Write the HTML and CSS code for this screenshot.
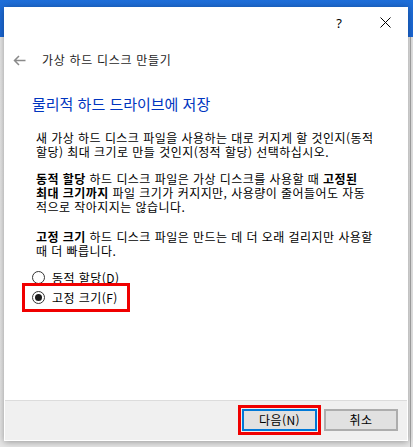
FILE: index.html
```html
<!DOCTYPE html>
<html lang="ko">
<head>
<meta charset="utf-8">
<title>가상 하드 디스크 만들기</title>
<link rel="stylesheet" href="styles.css">
</head>
<body>
<div class="dialog">
  <div class="titlebar">
    <span class="tb-btn help">?</span>
    <span class="tb-btn close"><svg width="11" height="11" viewBox="0 0 11 11"><path d="M0.5 0.5L10.5 10.5M10.5 0.5L0.5 10.5" fill="none" stroke="#000" stroke-width="1"/></svg></span>
  </div>
  <div class="nav">
    <svg class="back" width="13" height="11" viewBox="0 0 13 11"><path d="M12.5 5.5H1.5M6 1L1.5 5.5L6 10" fill="none" stroke="#8a8a8a" stroke-width="1.5"/></svg>
    <span class="nav-title">가상 하드 디스크 만들기</span>
  </div>
  <div class="content">
    <h1 class="heading">물리적 하드 드라이브에 저장</h1>
    <p class="text p1">새 가상 하드 디스크 파일을 사용하는 대로 커지게 할 것인지(동적<br>할당) 최대 크기로 만들 것인지(정적 할당) 선택하십시오.</p>
    <p class="text p2"><b>동적 할당</b> 하드 디스크 파일은 가상 디스크를 사용할 때 <b>고정된</b><br><b>최대 크기까지</b> 파일 크기가 커지지만, 사용량이 줄어들어도 자동<br>적으로 작아지지는 않습니다.</p>
    <p class="text p3"><b>고정 크기</b> 하드 디스크 파일은 만드는 데 더 오래 걸리지만 사용할<br>때 더 빠릅니다.</p>
    <div class="radios">
      <label class="radio"><span class="circle"></span>동적 할당(D)</label>
      <div class="mark">
        <label class="radio"><span class="circle checked"></span>고정 크기(F)</label>
      </div>
    </div>
  </div>
  <div class="footer">
    <div class="mark-btn"><button class="btn default">다음(N)</button></div>
    <button class="btn cancel">취소</button>
  </div>
</div>
</body>
</html>
```

FILE: styles.css
```css
html, body {
  margin: 0;
  padding: 0;
}
body {
  width: 413px;
  height: 447px;
  overflow: hidden;
  font-family: "Noto Sans CJK KR", "Noto Sans", sans-serif;
  background:
    linear-gradient(to left, #e4e4e4 0, #e4e4e4 2px, #a8a8a8 2px, #a8a8a8 3px, transparent 3px) right 37px / 6px 410px no-repeat,
    linear-gradient(to bottom, #1f6fd9 0, #1a66d4 37px, #e8e8e8 37px, #e6e6e6 100%);
}
.dialog {
  margin: 7px 0 0 4px;
  width: 404px;
  height: 434px;
  background: #fff;
  display: flex;
  flex-direction: column;
  box-shadow: 0 1px 7px rgba(0, 0, 0, 0.35);
}
.titlebar {
  height: 31px;
  flex: none;
  display: flex;
  justify-content: flex-end;
}
.tb-btn {
  width: 46px;
  height: 31px;
  display: flex;
  align-items: center;
  justify-content: center;
}
.help {
  font-family: "Noto Sans", sans-serif;
  font-size: 13px;
  color: #000;
  padding-top: 1px;
  box-sizing: border-box;
}
.close svg {
  display: block;
}
.nav {
  height: 44px;
  flex: none;
  display: flex;
  align-items: center;
  padding-left: 9px;
}
.back {
  display: block;
  margin-right: 16px;
}
.nav-title {
  font-size: 12px;
  color: #1e1e1e;
  line-height: 16px;
  letter-spacing: 0.7px;
}
.content {
  flex: 1;
  padding: 11px 0 0 28px;
}
.heading {
  margin: 0;
  font-size: 15px;
  font-weight: normal;
  line-height: 22px;
  color: #0035bf;
}
.text {
  margin: 16px 0 0 4px;
  font-size: 12px;
  line-height: 14px;
  letter-spacing: 0.45px;
  color: #000;
  white-space: nowrap;
}
.text b {
  font-weight: 700;
}
.p2 {
  margin-top: 13px;
}
.p3 {
  margin-top: 16px;
}
.radios {
  margin-top: 10px;
  display: flex;
  flex-direction: column;
  align-items: flex-start;
}
.radio {
  display: flex;
  align-items: center;
  height: 18px;
  font-size: 12px;
  letter-spacing: 0.45px;
  color: #000;
  gap: 7px;
}
.circle {
  width: 13px;
  height: 13px;
  box-sizing: border-box;
  border: 1px solid #333;
  border-radius: 50%;
  background: #fff;
  display: flex;
  align-items: center;
  justify-content: center;
}
.circle.checked::after {
  content: "";
  width: 7px;
  height: 7px;
  border-radius: 50%;
  background: #1b1b1b;
}
.mark {
  margin: -3px 0 0 -10px;
  width: 108px;
  height: 29px;
  box-sizing: border-box;
  border: 3px solid #f00000;
  padding: 0 0 0 7px;
  display: flex;
  align-items: center;
}
.mark .radio {
  height: 23px;
}
.footer {
  flex: none;
  height: 40px;
  margin: 0 1px 1px 1px;
  box-sizing: border-box;
  border-top: 1px solid #dcdcdc;
  background: #f0f0f0;
  display: flex;
  justify-content: flex-end;
  align-items: flex-start;
  padding: 4px 9px 0 0;
  gap: 3px;
}
.mark-btn {
  border: 3px solid #f00000;
  padding: 1px;
  display: flex;
}
.btn {
  height: 22px;
  margin: 0;
  padding: 0;
  box-sizing: border-box;
  background: #e1e1e1;
  font-family: "Noto Sans CJK KR", "Noto Sans", sans-serif;
  font-size: 12px;
  line-height: 16px;
  letter-spacing: 0.45px;
  color: #000;
  border: 2px solid #adadad;
}
.btn.default {
  width: 75px;
  border-color: #0078d7;
}
.btn.cancel {
  width: 74px;
  margin-top: 4px;
}
```
